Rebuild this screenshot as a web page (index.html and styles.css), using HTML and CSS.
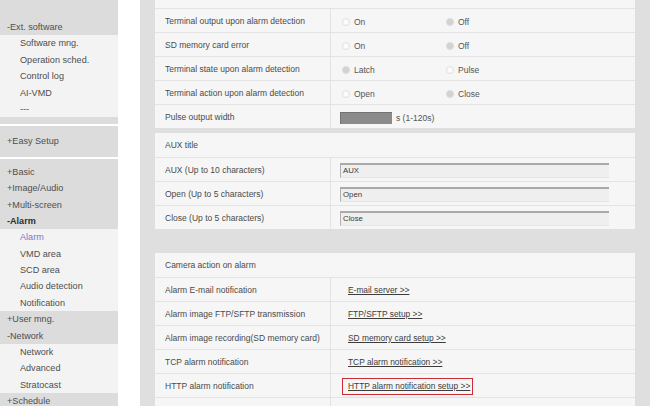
FILE: index.html
```html
<!DOCTYPE html>
<html lang="en">
<head>
<meta charset="UTF-8" />
<title>Alarm</title>
<link rel="stylesheet" href="styles.css">
</head>
<body>
<div class="page">
<nav class="side">
<div class="group g-first">
<div class="head">-Ext. software</div>
<div class="sub">Software mng.</div>
<div class="sub">Operation sched.</div>
<div class="sub">Control log</div>
<div class="sub">AI-VMD</div>
<div class="sub">---</div>
</div>
<div class="group g-single">
<div class="head">+Easy Setup</div>
</div>
<div class="group g-main">
<div class="head">+Basic</div>
<div class="head">+Image/Audio</div>
<div class="head">+Multi-screen</div>
<div class="head open">-Alarm</div>
<div class="sub active">Alarm</div>
<div class="sub">VMD area</div>
<div class="sub">SCD area</div>
<div class="sub">Audio detection</div>
<div class="sub">Notification</div>
<div class="head">+User mng.</div>
<div class="head">-Network</div>
<div class="sub">Network</div>
<div class="sub">Advanced</div>
<div class="sub">Stratocast</div>
<div class="head">+Schedule</div>
</div>
</nav>

<main class="main">
<section class="panel panel-top">
<div class="title"></div>
<div class="row">
<div class="label">Terminal output upon alarm detection</div>
<div class="value"><span class="opt"><i class="radio"></i>On</span><span class="opt"><i class="radio on"></i>Off</span></div>
</div>
<div class="row">
<div class="label">SD memory card error</div>
<div class="value"><span class="opt"><i class="radio"></i>On</span><span class="opt"><i class="radio on"></i>Off</span></div>
</div>
<div class="row">
<div class="label">Terminal state upon alarm detection</div>
<div class="value"><span class="opt"><i class="radio on"></i>Latch</span><span class="opt"><i class="radio"></i>Pulse</span></div>
</div>
<div class="row">
<div class="label">Terminal action upon alarm detection</div>
<div class="value"><span class="opt"><i class="radio"></i>Open</span><span class="opt"><i class="radio on"></i>Close</span></div>
</div>
<div class="row">
<div class="label">Pulse output width</div>
<div class="value"><span class="pulse"></span>s (1-120s)</div>
</div>
</section>

<section class="panel panel-aux">
<div class="title">AUX title</div>
<div class="row">
<div class="label">AUX (Up to 10 characters)</div>
<div class="value"><span class="field">AUX</span></div>
</div>
<div class="row">
<div class="label">Open (Up to 5 characters)</div>
<div class="value"><span class="field">Open</span></div>
</div>
<div class="row">
<div class="label">Close (Up to 5 characters)</div>
<div class="value"><span class="field">Close</span></div>
</div>
</section>

<section class="panel panel-action">
<div class="title">Camera action on alarm</div>
<div class="row">
<div class="label">Alarm E-mail notification</div>
<div class="value"><a class="link">E-mail server &gt;&gt;</a></div>
</div>
<div class="row">
<div class="label">Alarm image FTP/SFTP transmission</div>
<div class="value"><a class="link">FTP/SFTP setup &gt;&gt;</a></div>
</div>
<div class="row">
<div class="label">Alarm image recording(SD memory card)</div>
<div class="value"><a class="link">SD memory card setup &gt;&gt;</a></div>
</div>
<div class="row">
<div class="label">TCP alarm notification</div>
<div class="value"><a class="link">TCP alarm notification &gt;&gt;</a></div>
</div>
<div class="row">
<div class="label">HTTP alarm notification</div>
<div class="value"><a class="link marked">HTTP alarm notification setup &gt;&gt;</a></div>
</div>
<div class="row">
<div class="label"></div>
<div class="value"></div>
</div>
</section>
</main>
</div>
</body>
</html>
```

FILE: styles.css
```css
body {
margin: 0;
background: #ffffff;
font-family: "Liberation Sans", Arial, sans-serif;
color: #4a4a4a;
overflow: hidden;
}

.page {
display: flex;
gap: 22px;
width: 650px;
height: 406px;
overflow: hidden;
}

/* side menu */

.side {
width: 118px;
flex-shrink: 0;
display: flex;
flex-direction: column;
gap: 2px;
font-size: 9.1px;
}

.group {
background: #dcdcdc;
}

.g-first {
padding: 19px 0 7px;
}

.g-single {
padding: 7px 0;
}

.g-main {
padding-top: 5px;
}

.head, .sub {
height: 16.4px;
line-height: 16.4px;
white-space: nowrap;
}

.head {
padding-left: 7px;
color: #4e4e4e;
}

.head.open {
font-weight: bold;
color: #2e2e2e;
}

.sub {
padding-left: 20px;
background: #f3f3f3;
color: #4e4e4e;
}

.sub.active {
color: #7b78c9;
}

/* main settings area */

.main {
flex: 1;
background: #dfdfdf;
padding: 0 15px;
font-size: 8.5px;
}

.panel {
background: #f6f6f6;
}

.panel-top {
margin-top: -16px;
}

.panel-aux {
margin-top: 5px;
}

.panel-action {
margin-top: 24px;
}

.title {
height: 24px;
line-height: 25px;
padding-left: 10px;
}

.row {
display: grid;
grid-template-columns: 176px 1fr;
height: 24px;
border-top: 1px solid #e3e3e3;
box-sizing: border-box;
}

.label {
padding-left: 10px;
line-height: 24px;
border-right: 1px solid #e3e3e3;
white-space: nowrap;
}

.value {
display: flex;
align-items: center;
padding: 1px 0 0 11px;
color: #555;
}

.opt {
display: flex;
align-items: center;
width: 104px;
}

.radio {
width: 6px;
height: 6px;
border-radius: 50%;
border: 1px solid #e0e0e0;
background: #fbfbfb;
margin-right: 4px;
}

.radio.on {
background: #d3d3d3;
border-color: #dadada;
}

.pulse {
width: 52px;
height: 12px;
margin: 0 4px 0 -2px;
background: #8b8b8b;
box-shadow: inset 1px 1px 0 #727272;
}

.field {
width: 266px;
height: 12px;
margin-left: -2px;
padding-left: 2px;
border-top: 2px solid #a9a9a9;
border-left: 1px solid #b0b0b0;
border-bottom: 1px solid #e6e6e6;
background: #efefef;
font-size: 7.8px;
line-height: 12px;
color: #3a3a3a;
}

.link {
display: inline-block;
padding: 0 2px 0 5px;
height: 15px;
line-height: 15px;
border: 1px solid transparent;
font-size: 8.4px;
color: #3c3c3c;
text-decoration: underline;
}

.link.marked {
border: 1.5px solid #cc2d35;
}
```
